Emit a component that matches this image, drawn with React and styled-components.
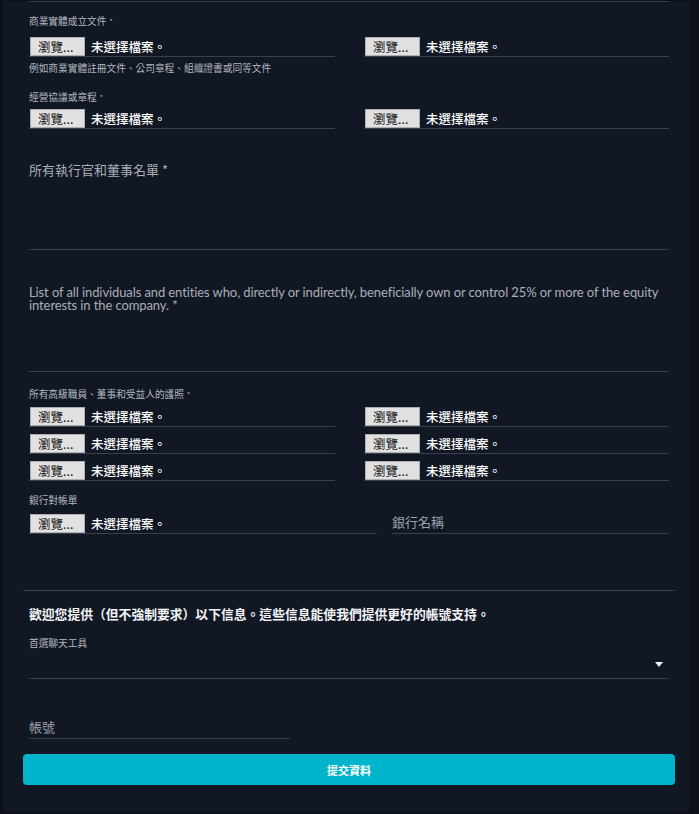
import React from "react";
import styled, { createGlobalStyle } from "styled-components";

const GlobalStyle = createGlobalStyle`
    body {
        margin: 0;
        background: #0c1019;
        font-family: "Noto Sans CJK TC", "Noto Sans", sans-serif;
    }
`

const Panel = styled.div`
    box-sizing: border-box;
    width: 686px;
    height: 811px;
    margin-left: 3px;
    padding: 0 14px 0 20px;
    background: #111723;
    border-radius: 0 0 3px 3px;
`

const Section = styled.div`
    padding: 0 ${p => p.$flush ? 0 : 6}px;
    margin-top: ${p => p.$top || 0}px;
`

const Rule = styled.div`
    height: 1px;
    background: #3a414e;
    margin: ${p => p.$top || 0}px ${p => p.$inset ? 6 : 0}px 0;
`

const SmallLabel = styled.div`
    font-size: 9.7px;
    line-height: 12px;
    color: #b3b8c0;
    margin-top: ${p => p.$top || 0}px;
    white-space: nowrap;
`

const Required = styled.span`
    font-size: 7px;
    vertical-align: top;
    margin-left: 3px;
`

const Grid = styled.div`
    display: grid;
    grid-template-columns: ${p => p.$cols || "306px 305px"};
    column-gap: ${p => p.$gap || 29}px;
    row-gap: 7px;
    align-items: end;
    margin-top: ${p => p.$top || 0}px;
`

const FileRow = styled.div`
    display: flex;
    align-items: center;
    height: 19px;
    border-bottom: 1px solid #3a414e;
`

const BrowseButton = styled.button`
    box-sizing: border-box;
    width: 55px;
    height: 19px;
    padding: 0 0 0 7px;
    margin: 0 0 0 1px;
    text-align: left;
    background: #e1e1e1;
    border: 1px solid #adadad;
    color: #111;
    font-family: "Noto Sans CJK TC", sans-serif;
    font-size: 12.5px;
    line-height: 17px;
`

const FileName = styled.span`
    margin-left: 6px;
    color: #ffffff;
    font-size: 12.5px;
    font-weight: 500;
    line-height: 19px;
`

const TextField = styled.div`
    height: ${p => p.$height}px;
    border-bottom: 1px solid #3a414e;
`

const FieldLabel = styled.div`
    font-size: 13px;
    line-height: 16px;
    color: #a9afb8;
`

const EnglishLabel = styled.div`
    font-family: Lato, "Noto Sans", sans-serif;
    font-size: 13px;
    line-height: 13px;
    color: #a9afb8;
    letter-spacing: -0.1px;
`

const Placeholder = styled.div`
    font-size: 13px;
    line-height: 16px;
    color: #9ba1aa;
    padding-bottom: 3px;
    border-bottom: 1px solid #3a414e;
    width: ${p => p.$width || "auto"};
`

const Notice = styled.div`
    font-size: 12.8px;
    line-height: 16px;
    font-weight: 700;
    color: #f2f4f7;
    margin-top: 15px;
`

const SelectBox = styled.div`
    position: relative;
    height: 29px;
    border-bottom: 1px solid #3a414e;
`

const Caret = styled.svg`
    position: absolute;
    right: 6px;
    top: 13px;
`

const SubmitButton = styled.button`
    display: block;
    width: 100%;
    height: 31px;
    margin-top: 15px;
    border: none;
    border-radius: 4px;
    background: #00b4cc;
    color: #ffffff;
    font-family: "Noto Sans CJK TC", sans-serif;
    font-size: 11px;
    font-weight: 700;
`

function FileInput() {
    return (
        <FileRow>
            <BrowseButton type="button">瀏覽...</BrowseButton>
            <FileName>未選擇檔案。</FileName>
        </FileRow>
    )
}

export default function App() {
    return (
        <>
            <GlobalStyle />
            <Panel>
                <Rule $top={1} $inset />

                <Section>
                    <SmallLabel $top={13}>商業實體成立文件<Required>*</Required></SmallLabel>
                    <Grid $top={10}>
                        <FileInput />
                        <FileInput />
                    </Grid>
                    <SmallLabel $top={5}>例如商業實體註冊文件、公司章程、組織證書或同等文件</SmallLabel>

                    <SmallLabel $top={17}>經營協議或章程<Required>*</Required></SmallLabel>
                    <Grid $top={6}>
                        <FileInput />
                        <FileInput />
                    </Grid>
                </Section>

                <Section $top={33}>
                    <TextField $height={87}>
                        <FieldLabel>所有執行官和董事名單 *</FieldLabel>
                    </TextField>
                </Section>

                <Section $top={36}>
                    <TextField $height={85}>
                        <EnglishLabel>
                            List of all individuals and entities who, directly or indirectly, beneficially own or control 25% or more of the equity interests in the company. *
                        </EnglishLabel>
                    </TextField>
                </Section>

                <Section>
                    <SmallLabel $top={16}>所有高級職員、董事和受益人的護照<Required>*</Required></SmallLabel>
                    <Grid $top={7}>
                        {[0, 1, 2, 3, 4, 5].map(i => <FileInput key={i} />)}
                    </Grid>

                    <SmallLabel $top={13}>銀行對帳單</SmallLabel>
                    <Grid $top={8} $cols="348px 277px" $gap={15}>
                        <FileInput />
                        <Placeholder>銀行名稱</Placeholder>
                    </Grid>
                </Section>

                <Rule $top={56} />

                <Section>
                    <Notice>歡迎您提供（但不強制要求）以下信息。這些信息能使我們提供更好的帳號支持。</Notice>
                    <SmallLabel $top={15}>首選聊天工具</SmallLabel>
                    <SelectBox>
                        <Caret width="8" height="5" viewBox="0 0 8 5">
                            <path d="M0 0 H8 L4 5 Z" fill="#f2f4f7" />
                        </Caret>
                    </SelectBox>
                    <Section $top={40} $flush>
                        <Placeholder $width="261px">帳號</Placeholder>
                    </Section>
                </Section>

                <SubmitButton type="button">提交資料</SubmitButton>
            </Panel>
        </>
    )
}
